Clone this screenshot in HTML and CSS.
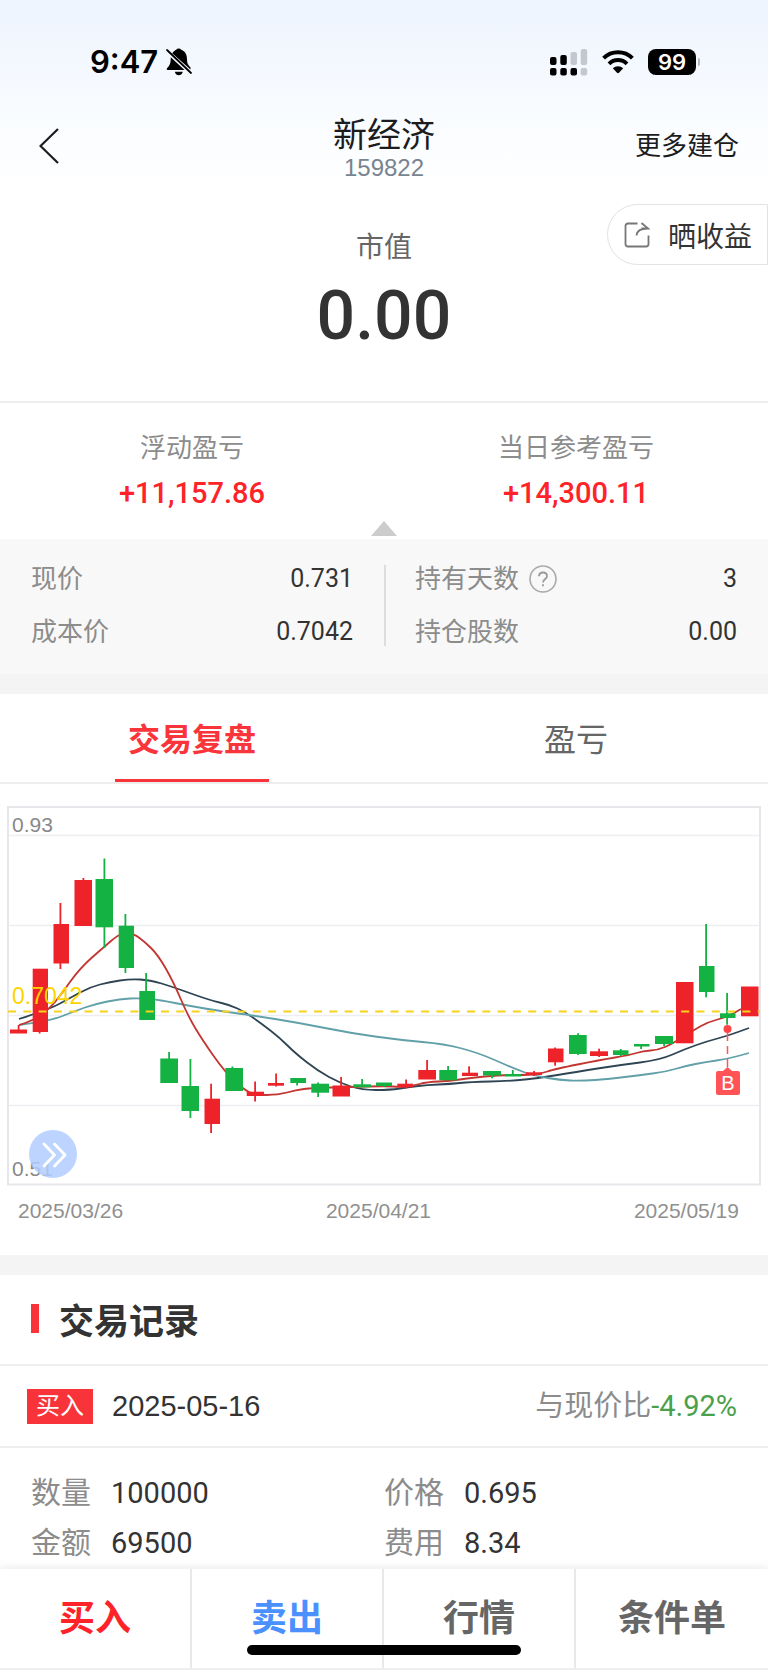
FILE: index.html
```html
<!DOCTYPE html>
<html lang="zh-CN">
<head>
<meta charset="utf-8">
<meta name="viewport" content="width=device-width, initial-scale=1">
<title>新经济 159822</title>
<link rel="stylesheet" href="styles.css">
</head>
<body>
<div class="top">
  <div class="status">
    <div class="status-left">
      <span class="clock">9:47</span>
      <svg class="bell" viewBox="0 0 26 28" aria-hidden="true">
        <path d="M6.200 5.300C7.600 3.500 9 2.400 10.200 1.800Q11 .4 12.700 .4T15.200 1.800C19.500 3.200 21 7 21 11.500C21 15 22 17 24.500 19.500V21.500Z"/>
        <path d="M4.800 9.200L18.500 22H1.600C.6 22 .4 20.800 1.200 20C3.600 17.500 4.600 15.500 4.700 11.500ZM8.800 23.800H16.800C16 26.500 14.600 27.300 12.800 27.300S9.600 26.500 8.800 23.800Z"/>
        <path d="M1 2L25 25" fill="none" stroke="#000" stroke-width="1.800" stroke-linecap="round"/>
      </svg>
    </div>
    <div class="status-right">
      <svg class="signal" viewBox="0 0 38 27" aria-hidden="true">
        <g fill="#000"><rect x="0" y="8" width="6.500" height="8" rx="2"/><rect x="10.300" y="6" width="6.500" height="10" rx="2"/><rect x="0" y="19" width="6.500" height="7.500" rx="2"/><rect x="10.300" y="19" width="6.500" height="7.500" rx="2"/><rect x="20.500" y="19" width="6.500" height="7.500" rx="2"/></g>
        <g fill="#c4c7cd"><rect x="20.500" y="3" width="6.500" height="13" rx="2"/><rect x="30.700" y="0" width="6.500" height="16" rx="2"/><rect x="30.700" y="19" width="6.500" height="7.500" rx="2"/></g>
      </svg>
      <svg class="wifi" viewBox="0 0 32 24" aria-hidden="true">
        <path d="M1.600 8.200A20.500 20.500 0 0 1 30.400 8.200M7 13.800A12.800 12.800 0 0 1 25 13.800" fill="none" stroke="#000" stroke-width="4"/>
        <path d="M10.800 18.300A7.500 7.500 0 0 1 21.200 18.300L17 22.700Q16 23.600 15 22.700Z"/>
      </svg>
      <span class="battery">99</span>
    </div>
  </div>
  <header class="header">
    <button class="back" type="button" aria-label="返回"><svg viewBox="0 0 20 36" aria-hidden="true"><path d="M19 1L1.500 18L19 35" fill="none" stroke="#1c1c1e" stroke-width="2.200"/></svg></button>
    <div class="heading"><h1>新经济</h1><span class="code">159822</span></div>
    <button class="more" type="button">更多建仓</button>
  </header>
</div>

<main>
  <section class="market">
    <span class="market-label">市值</span>
    <strong class="market-value">0.00</strong>
    <button class="share" type="button">
      <svg viewBox="0 0 26 26" aria-hidden="true"><path d="M13.500 1.500H4Q1.500 1.500 1.500 4V22Q1.500 24.500 4 24.500H22Q24.500 24.500 24.500 22V13.500M12.500 13.500Q13 6.500 23.500 6.500M17.500 1L24 6.500H17.500" fill="none" stroke="#777" stroke-width="1.800"/></svg>
      <span>晒收益</span>
    </button>
  </section>

  <section class="profit">
    <div><span class="label">浮动盈亏</span><span class="gain">+11,157.86</span></div>
    <div><span class="label">当日参考盈亏</span><span class="gain">+14,300.11</span></div>
    <i class="fold"></i>
  </section>

  <section class="details">
    <dl>
      <div><dt>现价</dt><dd>0.731</dd></div>
      <div><dt>成本价</dt><dd>0.7042</dd></div>
    </dl>
    <dl>
      <div><dt>持有天数<button class="help" type="button" aria-label="说明"><svg viewBox="0 0 28 28" aria-hidden="true"><circle cx="14" cy="14" r="13" fill="none" stroke="#aaa" stroke-width="1.600"/><path d="M10 11.300Q10 7.500 14 7.500T18 11.200C18 14 14 14 14 17.500M14 19.200V21.300" fill="none" stroke="#999" stroke-width="1.800"/></svg></button></dt><dd>3</dd></div>
      <div><dt>持仓股数</dt><dd>0.00</dd></div>
    </dl>
  </section>

  <nav class="tabs">
    <button class="tab active" type="button">交易复盘</button>
    <button class="tab" type="button">盈亏</button>
  </nav>

  <section class="chart">
    <div class="plot">
      <svg id="kline" viewBox="0 804 768 384" role="img" aria-label="K线图">
        <g fill="none" stroke="#ededf4" stroke-width="1.500"><path d="M8 835.500H760M8 925.500H760M8 1015.500H760M8 1105.500H760"/></g>
        <rect x="8" y="807" width="752" height="377.500" fill="none" stroke="#e7e7eb" stroke-width="2"/>
        <g id="averages" fill="none" stroke-width="1.800"></g>
        <g id="candles"></g>
        <path d="M8 1011.500H760" stroke="#f8d21c" stroke-width="2.200" stroke-dasharray="8 7.300"/>
        <g class="axis"><text x="12" y="832">0.93</text><text x="12" y="1176">0.51</text></g>
        <text class="cost" x="12" y="1004">0.7042</text>
        <circle cx="727.500" cy="1029" r="4" fill="#ff4447"/>
        <path d="M727.500 1033V1068" stroke="#ff5558" stroke-width="1.500" stroke-dasharray="8 5"/>
        <path d="M718 1071H723L727.500 1067L732 1071H738Q740 1071 740 1073V1093Q740 1095 738 1095H718Q716 1095 716 1093V1073Q716 1071 718 1071Z" fill="#ff5356"/>
        <text class="mark" x="728" y="1090">B</text>
      </svg>
      <button class="expand" type="button" aria-label="展开"><svg viewBox="0 0 48 48" aria-hidden="true"><path d="M15 14L25.500 25L15 36M25.500 14L36 25L25.500 36" fill="none" stroke="#fff" stroke-width="2.800" stroke-linecap="round" stroke-linejoin="round"/></svg></button>
    </div>
    <div class="dates"><time>2025/03/26</time><time>2025/04/21</time><time>2025/05/19</time></div>
  </section>

  <section class="records">
    <h2>交易记录</h2>
    <div class="record-head">
      <span class="tag">买入</span><time class="record-date">2025-05-16</time>
      <span class="compare">与现价比<b>-4.92%</b></span>
    </div>
    <dl class="record">
      <div><dt>数量</dt><dd>100000</dd></div>
      <div><dt>价格</dt><dd>0.695</dd></div>
      <div><dt>金额</dt><dd>69500</dd></div>
      <div><dt>费用</dt><dd>8.34</dd></div>
    </dl>
  </section>
</main>

<nav class="actions">
  <button class="buy" type="button">买入</button>
  <button class="sell" type="button">卖出</button>
  <button type="button">行情</button>
  <button type="button">条件单</button>
  <i class="home"></i>
</nav>
<script src="chart.js"></script>
</body>
</html>
```

FILE: styles.css
```css
* { box-sizing: border-box; }
body {
  margin: 0;
  background: #fff;
  color: #333;
  font-family: Roboto, "Noto Sans CJK SC", sans-serif;
}
button {
  border: 0;
  padding: 0;
  background: none;
  color: inherit;
  font: inherit;
}
svg { display: block; }
h1, h2, dl, dd { margin: 0; }

.top { background: linear-gradient(#edf4fe, #f8fbff 55%, #fff); }
.status {
  display: flex;
  justify-content: space-between;
  align-items: center;
  height: 104px;
  padding: 20px 72px 0 90px;
}
.status-left, .status-right { display: flex; align-items: center; }
.status-left { gap: 8px; }
.clock { font: 600 31px/40px Inter, sans-serif; color: #000; }
.bell { width: 26px; height: 28px; }
.signal { width: 38px; height: 27px; margin-right: 14px; }
.wifi { width: 32px; height: 24px; margin-right: 14px; }
.battery {
  position: relative;
  width: 48px;
  height: 26px;
  border-radius: 8px;
  background: #000;
  color: #fff;
  font: 600 22px/26px Inter, sans-serif;
  text-align: center;
}
.battery::after {
  content: "";
  position: absolute;
  left: 50px;
  top: 9px;
  width: 2px;
  height: 8px;
  border-radius: 0 2px 2px 0;
  background: #b4b7bc;
}
.header {
  display: grid;
  grid-template-columns: 1fr auto 1fr;
  align-items: center;
  height: 84px;
  padding: 0 29px;
  color: #1c1c1e;
}
.back { justify-self: start; margin-left: 10px; }
.back svg { width: 20px; height: 36px; }
.heading {
  display: flex;
  flex-direction: column;
  align-items: center;
  padding-top: 2px;
}
h1 { font-size: 34px; font-weight: 400; line-height: 42px; }
.code {
  color: #78848f;
  font: 24px/24px "Liberation Sans", sans-serif;
}
.more { justify-self: end; font-size: 26px; line-height: 36px; }

.market {
  position: relative;
  display: flex;
  flex-direction: column;
  align-items: center;
  height: 215px;
  padding-top: 42px;
  border-bottom: 2px solid #eee;
}
.market-label { font-size: 28px; line-height: 36px; color: #666; }
.market-value { font-size: 68px; font-weight: 500; line-height: 100px; }
.share {
  position: absolute;
  right: 0;
  top: 16px;
  display: flex;
  align-items: center;
  gap: 18px;
  height: 61px;
  padding: 0 15px 0 16px;
  border: 1px solid #e2e2e2;
  border-radius: 31px 0 0 31px;
  background: #fff;
  font-size: 28px;
}
.share svg { width: 26px; height: 26px; }

.profit {
  position: relative;
  display: grid;
  grid-template-columns: 1fr 1fr;
  height: 136px;
  padding-top: 25px;
  text-align: center;
}
.profit > div { display: flex; flex-direction: column; }
.label { font-size: 26px; line-height: 40px; color: #8c8c8c; }
.gain { font-size: 29px; font-weight: 500; line-height: 51px; color: #fd2329; }
.fold {
  position: absolute;
  left: calc(50% - 13px);
  bottom: 3px;
  border: solid transparent;
  border-width: 0 13px 15px;
  border-bottom-color: #ccc;
}

.details {
  display: grid;
  grid-template-columns: 1fr 1fr;
  padding: 26px 0 28px;
  background: #f8f8f8;
  border-bottom: 20px solid #f4f4f4;
}
.details dl { padding: 0 31px; }
.details dl + dl { border-left: 2px solid #ddd; padding-left: 29px; }
.details dl > div {
  display: flex;
  justify-content: space-between;
  align-items: center;
  height: 28px;
}
.details dl > div + div { margin-top: 25px; }
.details dt { display: flex; align-items: center; gap: 10px; font-size: 26px; line-height: 28px; color: #8c8c8c; }
.details dd { font-size: 25px; line-height: 28px; }
.help svg { width: 28px; height: 28px; }

.tabs {
  display: grid;
  grid-template-columns: 1fr 1fr;
  justify-items: center;
  border-bottom: 2px solid #eee;
}
.tab {
  width: 154px;
  height: 88px;
  border-bottom: 3px solid transparent;
  font-size: 32px;
  color: #666;
}
.tab.active { border-color: #f9343a; color: #f9343a; font-weight: 700; }

.chart { padding-top: 20px; border-bottom: 20px solid #f4f4f4; }
.plot { position: relative; }
.plot > svg { width: 100%; height: auto; }
.axis { font: 21px "Liberation Sans", sans-serif; fill: #888; }
.cost { font: 23px "Liberation Sans", sans-serif; fill: #fcd400; }
.mark { font: 20px "Liberation Sans", sans-serif; fill: #fff; text-anchor: middle; }
.expand {
  position: absolute;
  left: 29px;
  bottom: 10px;
  width: 48px;
  height: 48px;
  border-radius: 50%;
  background: rgb(176 205 255 / 85%);
}
.dates {
  display: flex;
  justify-content: space-between;
  padding: 11px 29px 32px 18px;
  color: #909090;
  font: 21px/24px "Liberation Sans", sans-serif;
}

h2 {
  display: flex;
  align-items: center;
  gap: 20px;
  height: 91px;
  padding: 0 0 2px 31px;
  border-bottom: 2px solid #eee;
  font-size: 35px;
  font-weight: 700;
}
h2::before { content: ""; width: 8px; height: 29px; background: #f8343a; }
.record-head {
  display: flex;
  align-items: center;
  height: 82px;
  padding: 0 31px 0 27px;
  border-bottom: 2px solid #eee;
  font-size: 29px;
  line-height: 35px;
}
.tag {
  width: 66px;
  margin-right: 19px;
  background: #f8343a;
  color: #fff;
  font-size: 24px;
  line-height: 35px;
  text-align: center;
}
.record-date { font-family: "Liberation Sans", sans-serif; }
.compare { margin-left: auto; color: #8c8c8c; }
.compare b { font-weight: 400; color: #4ba04b; }
.record {
  display: grid;
  grid-template-columns: 1fr 1fr;
  padding: 20px 0 1px;
}
.record > div { display: flex; gap: 20px; line-height: 50px; padding-left: 31px; }
.record > div:nth-child(even) { padding-left: 0; }
.record dt { font-size: 30px; color: #8c8c8c; }
.record dd { font-size: 29px; }

.actions {
  position: sticky;
  bottom: 0;
  display: grid;
  grid-template-columns: repeat(4, 1fr);
  height: 101px;
  border-bottom: 2px solid #eee;
  background: #fff;
  box-shadow: 0 -2px 8px rgb(0 0 0 / 8%);
  color: #666;
  font-size: 36px;
  font-weight: 700;
}
.actions button {
  padding-bottom: 8px;
  border-right: 2px solid #e8e8e8;
}
.actions button:last-of-type { border-right: 0; }
.actions .buy { color: #fd2329; }
.actions .sell { color: #4a90ff; }
.home {
  position: absolute;
  left: 50%;
  bottom: 13px;
  width: 274px;
  height: 10px;
  margin-left: -137px;
  border-radius: 5px;
  background: #000;
}
```

FILE: chart.js
```js
const RED = '#ee2229';
const GREEN = '#14b143';

// [colour, left, right, bodyTop, bodyBottom, wickX, wickTop, wickBottom]
const candles = [
  [RED, 10, 27, 1029.5, 1033.5, 18.5, 1025, 1033],
  [RED, 32.7, 48, 968.7, 1032, 39.5, 969, 1033.5],
  [RED, 53.5, 69, 924, 963.5, 60.3, 903, 969],
  [RED, 74.5, 92, 880, 926, 83.3, 878, 920],
  [GREEN, 95.5, 113, 879, 927.3, 104.3, 858.5, 948],
  [GREEN, 118.7, 134, 925.7, 968, 125.3, 914, 973],
  [GREEN, 139.3, 155, 991, 1020, 146, 973, 1019],
  [GREEN, 160.3, 178, 1058.5, 1083, 169, 1052, 1080],
  [GREEN, 181.5, 199, 1086, 1111, 190.3, 1059, 1118],
  [RED, 204.5, 220, 1098.7, 1124, 211, 1083.7, 1133],
  [GREEN, 225.3, 243, 1068, 1091, 232.3, 1066.5, 1090],
  [RED, 246.7, 264, 1091.7, 1096, 255, 1081.5, 1101.5],
  [RED, 268, 284, 1083, 1085.7, 276, 1073.5, 1086.5],
  [GREEN, 290.3, 306, 1078, 1083, 297, 1079, 1085.5],
  [GREEN, 311.3, 329, 1083.7, 1092.7, 318, 1082.5, 1097],
  [RED, 332.5, 350, 1085.5, 1096.5, 341, 1077, 1096],
  [GREEN, 353.3, 371, 1084.3, 1087.3, 362, 1079, 1087],
  [GREEN, 376, 392, 1082.5, 1086, 384, 1083, 1087],
  [RED, 397.3, 413, 1083.7, 1087.3, 406, 1079.5, 1088.5],
  [RED, 418.3, 436, 1070, 1079.5, 427, 1060, 1079],
  [GREEN, 439.3, 457, 1070, 1080.3, 448, 1066, 1080],
  [RED, 462, 478, 1072.7, 1076, 469, 1066.3, 1075],
  [GREEN, 483, 501, 1071, 1075.5, 492, 1072, 1078.3],
  [GREEN, 504.7, 521, 1074, 1076.5, 512.7, 1070, 1076],
  [RED, 526, 542, 1072.3, 1075, 534, 1071, 1076],
  [RED, 548, 563.5, 1048.5, 1062.3, 555, 1047.5, 1065.7],
  [GREEN, 569, 586.7, 1035, 1054, 578, 1033.3, 1055],
  [RED, 590, 608, 1051.3, 1056, 599, 1048.7, 1057],
  [GREEN, 613, 628.5, 1050.3, 1055, 620.7, 1049, 1056],
  [GREEN, 634, 649.5, 1044, 1046.5, 641, 1044, 1049],
  [GREEN, 655, 673, 1036, 1044, 664, 1037, 1046],
  [RED, 676, 693.5, 982, 1043.3, 684, 983, 1043],
  [GREEN, 699, 714.5, 966, 992, 706, 924, 997.3],
  [GREEN, 720, 735.5, 1013.3, 1018, 727, 993, 1024.7],
  [RED, 741, 758.5, 986.5, 1016.3, 750, 987, 1016]
];

const averages = [
  ['#2f4554', [[19,1019],[50,1009],[70,998],[90,987],[110,982],[130,979],[150,980],[173,987],[195,995],[213,1001],[230,1005],[245,1012],[262,1024],[280,1038],[295,1053],[318,1071],[340,1083],[362,1090],[390,1090],[410,1087],[427,1085],[450,1084],[470,1082],[510,1081],[540,1078],[575,1072],[620,1065],[660,1060],[685,1049],[708,1041],[727,1036],[749,1028]]],
  ['#61a0a8', [[19,1025],[50,1021],[75,1011],[95,1004],[120,999],[140,998],[160,1000],[190,1006],[220,1011],[250,1015],[300,1023],[350,1033],[400,1040],[445,1044],[475,1052],[495,1060],[515,1069],[535,1076],[560,1080],[580,1081],[610,1079],[640,1075],[665,1072],[685,1066],[706,1062],[727,1059],[749,1053]]],
  ['#c23531', [[19,1025],[33,1021],[50,1008],[60,996],[80,968],[104,947],[118,935],[126,933],[134,934],[145,942],[158,955],[173,981],[188,1016],[203,1041],[225,1072],[243,1089],[255,1095],[278,1095],[296,1090],[312,1088],[350,1087],[385,1086],[400,1087],[412,1086],[427,1082],[450,1081],[470,1078],[500,1075],[525,1075],[540,1074],[555,1069],[600,1060],[630,1055],[643,1051],[658,1050],[672,1044],[694,1030],[708,1022],[727,1017],[741,1009]]]
];

function add(parent, name, attributes) {
  const node = document.createElementNS('http://www.w3.org/2000/svg', name);
  for (const key in attributes) node.setAttribute(key, attributes[key]);
  parent.appendChild(node);
}

// Passes a rounded curve through the midpoints of neighbouring samples.
function curve(points) {
  let d = 'M' + points[0];
  for (let i = 1; i < points.length - 1; i++) {
    const [x, y] = points[i];
    const [nx, ny] = points[i + 1];
    d += `Q${x} ${y} ${(x + nx) / 2} ${(y + ny) / 2}`;
  }
  return d + 'L' + points[points.length - 1];
}

const lines = document.getElementById('averages');
averages.forEach(([stroke, points]) => add(lines, 'path', { d: curve(points), stroke }));

const bars = document.getElementById('candles');
candles.forEach(([fill, left, right, top, bottom, x, high, low]) => {
  add(bars, 'rect', { x: x - 0.8, y: high, width: 1.8, height: low - high, fill });
  add(bars, 'rect', { x: left, y: top, width: right - left, height: bottom - top, fill });
});
```
